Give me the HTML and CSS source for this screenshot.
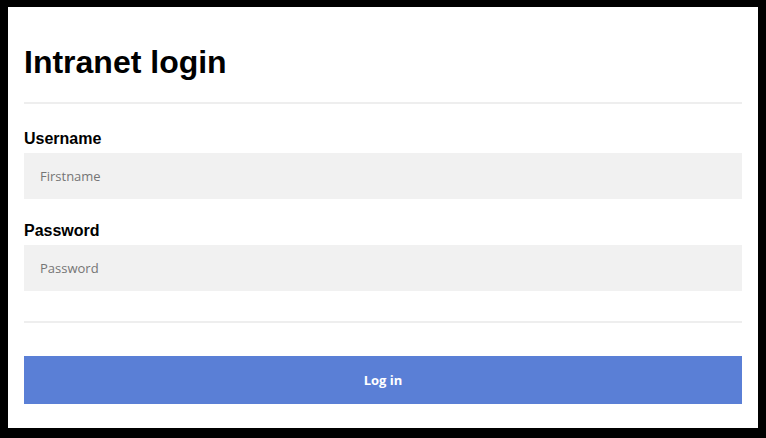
FILE: index.html
```html
<!DOCTYPE html>
<html lang="en">
<head>
<meta charset="utf-8">
<title>Intranet login</title>
<link rel="stylesheet" href="styles.css">
</head>
<body>
<main class="card">
  <h1 class="title">Intranet login</h1>
  <hr class="rule">
  <form class="form">
    <div class="field field-first">
      <label class="label" for="username">Username</label>
      <input class="input" id="username" type="text" placeholder="Firstname">
    </div>
    <div class="field">
      <label class="label" for="password">Password</label>
      <input class="input" id="password" type="password" placeholder="Password">
    </div>
    <hr class="rule rule-bottom">
    <button class="button" type="button">Log in</button>
  </form>
</main>
</body>
</html>
```
FILE: styles.css
```css
html, body {
  margin: 0;
  padding: 0;
  background: #000;
}
body {
  padding: 7px 8px 10px;
  font-family: "Liberation Sans", Arial, sans-serif;
}
.card {
  background: #fff;
  padding: 16px 16px 24px;
  display: block;
}
.title {
  font-size: 32px;
  font-weight: 700;
  margin: 20.5px 0 21px;
  line-height: 37px;
  color: #000;
}
.rule {
  border: none;
  height: 2px;
  background: #eeeeee;
  margin: 0;
}
.form {
  display: flex;
  flex-direction: column;
}
.field {
  display: flex;
  flex-direction: column;
  margin-top: 22px;
}
.field-first {
  margin-top: 25px;
}
.label {
  font-size: 16px;
  font-weight: 700;
  line-height: 19px;
  margin-bottom: 5px;
  color: #000;
}
.input {
  box-sizing: border-box;
  height: 46px;
  border: none;
  background: #f1f1f1;
  padding: 0 16px;
  font-family: "Open Sans", sans-serif;
  font-size: 13px;
  color: #333;
  outline: none;
  width: 100%;
}
.input::placeholder {
  color: #757575;
}
.rule-bottom {
  margin-top: 30px;
}
.button {
  margin-top: 33px;
  height: 48px;
  border: none;
  background: #5a7fd6;
  color: #fff;
  font-family: "Open Sans", sans-serif;
  font-weight: 700;
  font-size: 13px;
  width: 100%;
  cursor: pointer;
}
```
